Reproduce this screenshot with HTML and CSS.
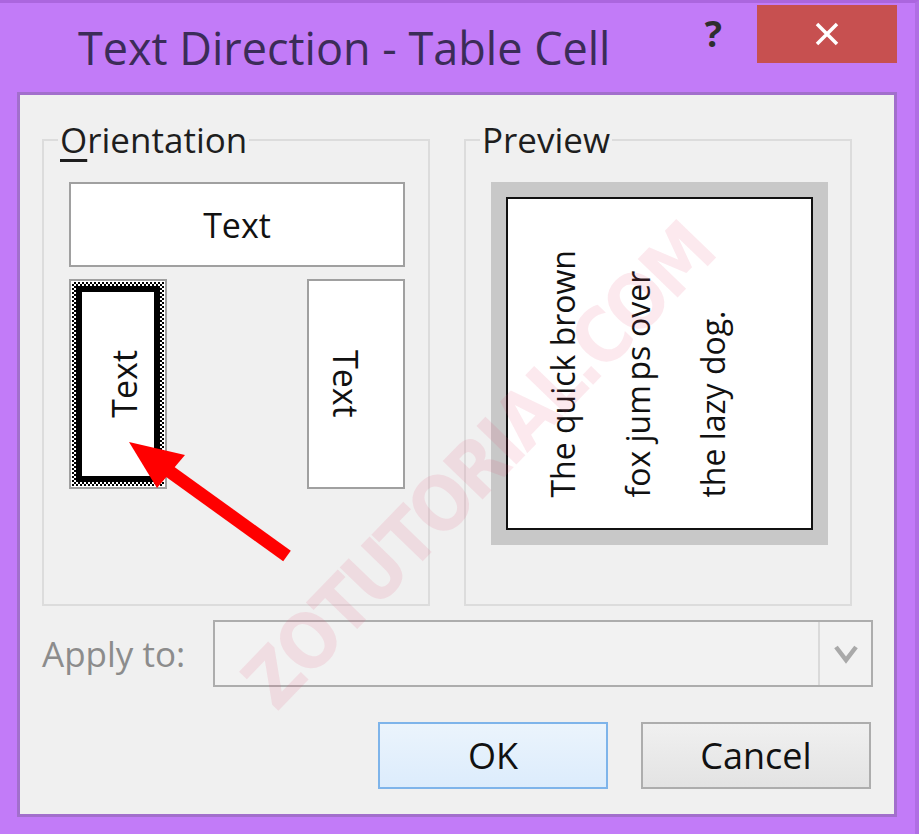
FILE: index.html
```html
<!DOCTYPE html>
<html lang="en">
<head>
  <meta charset="UTF-8">
  <title>Text Direction - Table Cell</title>
  <link rel="stylesheet" href="styles.css">
</head>
<body>
  <div class="window">
    <div class="titlebar">
      <div class="title">Text Direction - Table Cell</div>
      <div class="help">?</div>
      <div class="close">
        <svg width="26" height="24" viewBox="0 0 26 24">
          <path d="M3 2 L23 22 M23 2 L3 22" stroke="#fff" stroke-width="3.5" fill="none"/>
        </svg>
      </div>
    </div>

    <div class="client">
      <div class="groups">
        <fieldset class="group">
          <legend><u>O</u>rientation</legend>
          <div class="opt opt-horiz">Text</div>
          <div class="vert-row">
            <div class="opt-wrap">
              <div class="focus">
                <div class="opt-sel"><span class="text-up">Text</span></div>
              </div>
            </div>
            <div class="opt opt-down"><span class="text-down">Text</span></div>
          </div>
        </fieldset>

        <fieldset class="group">
          <legend>Preview</legend>
          <div class="preview-frame">
            <div class="preview-page">
              <div class="preview-text">The quick brown<br>fox jum<span class="gap">ps</span> over<br>the lazy dog.</div>
            </div>
          </div>
        </fieldset>
      </div>

      <div class="apply-row">
        <label class="apply-label">Apply to:</label>
        <div class="combo">
          <div class="combo-btn">
            <svg width="24" height="20" viewBox="0 0 24 20">
              <path d="M2 3 L12 16 L22 3" stroke="#a9a9a9" stroke-width="4.5" fill="none"/>
            </svg>
          </div>
        </div>
      </div>

      <div class="buttons">
        <button class="btn btn-ok">OK</button>
        <button class="btn">Cancel</button>
      </div>
    </div>
  </div>

  <!-- tutorial overlay: watermark and pointer arrow -->
  <div class="watermark">ZOTUTORIAL.COM</div>
  <svg class="arrow" width="919" height="834" viewBox="0 0 919 834">
    <line x1="287" y1="556" x2="162" y2="466" stroke="#ff0000" stroke-width="13"/>
    <polygon points="129,442 185,455 157,488" fill="#ff0000"/>
  </svg>
</body>
</html>
```

FILE: styles.css
```css
html, body {
  margin: 0;
  padding: 0;
}
body {
  width: 919px;
  height: 834px;
  overflow: hidden;
  position: relative;
  background: #c27bf8;
  font-family: "Open Sans", "Noto Sans", sans-serif;
  color: #1a1a1a;
}
.window {
  height: 834px;
  box-sizing: border-box;
  border-top: 3px solid #ab66de;
  border-right: 4px solid #b06ee4;
}
.titlebar {
  height: 89px;
  display: flex;
  align-items: flex-start;
}
.title {
  margin-left: 78px;
  padding-top: 22px;
  font-size: 45px;
  line-height: 46px;
  color: #3b2c58;
  white-space: nowrap;
}
.help {
  margin-left: auto;
  margin-right: 35px;
  margin-top: 13px;
  font-size: 36px;
  line-height: 36px;
  font-weight: bold;
  color: #2e2e2e;
}
.close {
  margin-top: 2px;
  margin-right: 18px;
  width: 140px;
  height: 58px;
  background: #c75050;
  display: flex;
  align-items: center;
  justify-content: center;
}
.client {
  margin: 0 18px 0 17px;
  height: 725px;
  box-sizing: border-box;
  border: 3px solid #a26fcc;
  background: #f0f0f0;
  padding: 23px 21px 0 22px;
}
.groups {
  display: flex;
  gap: 34px;
}
.group {
  margin: 0;
  width: 388px;
  height: 488px;
  box-sizing: border-box;
  border: 2px solid #dcdcdc;
  padding: 20px 23px 0 25px;
  min-inline-size: 0;
}
.group legend {
  margin-left: -11px;
  padding: 0 2px;
  font-size: 35px;
  line-height: 44px;
  color: #1e1e1e;
}
.group legend u {
  text-underline-offset: 6px;
  text-decoration-thickness: 3px;
}
.opt {
  box-sizing: border-box;
  border: 2px solid #a0a0a0;
  background: #fff;
  display: flex;
  align-items: center;
  justify-content: center;
  font-size: 34px;
  color: #111;
}
.opt-horiz {
  height: 85px;
}
.vert-row {
  margin-top: 12px;
  height: 210px;
  display: flex;
  justify-content: space-between;
}
.opt-wrap {
  width: 98px;
  box-sizing: border-box;
  border: 2px solid #a0a0a0;
  padding: 1px;
  background: #fff;
}
.focus {
  height: 100%;
  box-sizing: border-box;
  padding: 4px;
  background: repeating-conic-gradient(#000 0 25%, #fff 0 50%) 0 0 / 4px 4px;
}
.opt-sel {
  height: 100%;
  box-sizing: border-box;
  border: 6px solid #000;
  background: #fff;
  display: flex;
  align-items: center;
  justify-content: center;
  padding-left: 12px;
  font-size: 34px;
  color: #111;
}
.opt-down {
  width: 98px;
  padding-right: 20px;
}
.text-up {
  writing-mode: vertical-rl;
  transform: rotate(180deg);
}
.text-down {
  writing-mode: vertical-rl;
}
.preview-frame {
  width: 337px;
  height: 363px;
  box-sizing: border-box;
  padding: 15px;
  background: #c8c8c8;
}
.preview-page {
  height: 100%;
  box-sizing: border-box;
  border: 2px solid #111;
  background: #fff;
  display: flex;
  align-items: flex-end;
  padding: 0 0 30px 17px;
}
.preview-text {
  writing-mode: vertical-rl;
  transform: rotate(180deg);
  font-size: 32px;
  line-height: 75px;
  white-space: nowrap;
  color: #111;
}
.preview-text .gap {
  margin-inline-start: 5px;
}
.apply-row {
  margin-top: 14px;
  display: flex;
  align-items: center;
}
.apply-label {
  width: 171px;
  font-size: 35px;
  color: #8c8c8c;
}
.combo {
  flex: 1;
  height: 67px;
  box-sizing: border-box;
  border: 2px solid #adadad;
  background: #f2f2f2;
  display: flex;
  justify-content: flex-end;
}
.combo-btn {
  width: 51px;
  border-left: 2px solid #dadada;
  display: flex;
  align-items: center;
  justify-content: center;
}
.buttons {
  margin-top: 35px;
  padding-right: 2px;
  display: flex;
  justify-content: flex-end;
  gap: 33px;
}
.btn {
  width: 230px;
  height: 67px;
  box-sizing: border-box;
  border: 2px solid #adadad;
  background: linear-gradient(#f0f0f0, #e3e3e3);
  font-family: "Open Sans", "Noto Sans", sans-serif;
  font-size: 36px;
  color: #111;
  padding: 0;
}
.btn-ok {
  border-color: #7eb4ea;
  background: linear-gradient(#ebf4fc, #dcecfc);
}
.watermark {
  position: absolute;
  left: 478px;
  top: 466px;
  transform: translate(-50%, -50%) rotate(-46deg);
  font-family: "DejaVu Sans Condensed", "Liberation Sans Narrow", sans-serif;
  font-weight: bold;
  font-size: 76px;
  letter-spacing: -4px;
  white-space: nowrap;
  color: rgba(228, 70, 112, 0.12);
  pointer-events: none;
}
.arrow {
  position: absolute;
  left: 0;
  top: 0;
  pointer-events: none;
}
```
